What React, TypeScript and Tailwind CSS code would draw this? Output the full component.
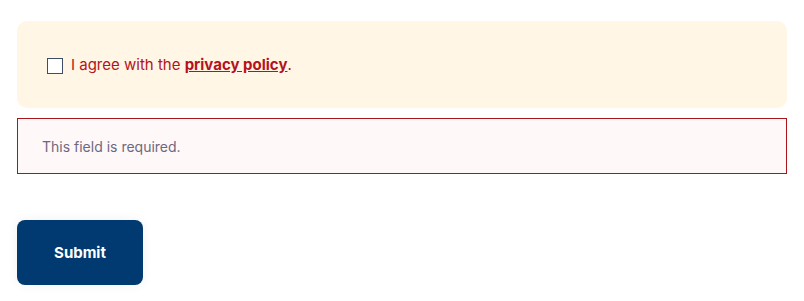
export default function App() {
  return (
    <div className="w-[804px] h-[301px] bg-white px-[17px] pt-[21px]" style={{ fontFamily: 'Inter, "Noto Sans", sans-serif' }}>
      <div className="h-[87px] rounded-[10px] bg-[#fff6e5] flex items-center px-[30px] pt-[2px]">
        <label className="flex items-center gap-[8px] text-[15px] text-[#b5121b]">
          <span className="w-[16px] h-[16px] border-[1.5px] border-[#3d4d6a] bg-white shrink-0" />
          <span>
            I agree with the <a className="font-bold underline">privacy policy</a>.
          </span>
        </label>
      </div>
      <div className="mt-[10px] h-[56px] border border-[#a8161c] bg-[#fff8f8] flex items-center px-[24px] text-[14px] text-[#6d6880]">
        This field is required.
      </div>
      <button className="mt-[46px] w-[126px] h-[65px] rounded-[8px] bg-[#003a70] text-white font-bold text-[15px] pt-[1px] shadow-[0_0_12px_rgba(0,0,0,0.06)]">
        Submit
      </button>
    </div>
  );
}
